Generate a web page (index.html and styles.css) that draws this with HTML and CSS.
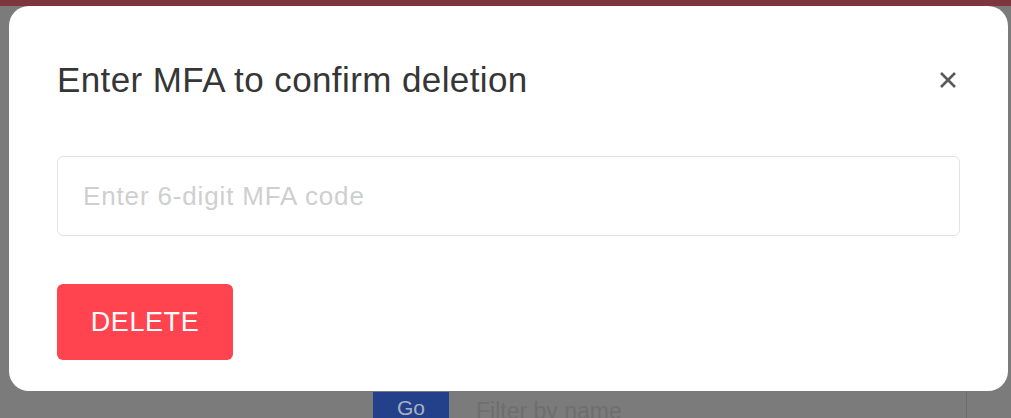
FILE: index.html
```html
<!DOCTYPE html>
<html>
<head>
<meta charset="utf-8">
<link rel="stylesheet" href="styles.css">
</head>
<body>
<div class="page">
  <div class="topbar"></div>
  <div class="content">
    <div class="spacer"></div>
    <div class="toolbar">
      <button class="go">Go</button>
      <div class="filter">Filter by name</div>
    </div>
  </div>
</div>
<div class="modal">
  <div class="modal-head">
    <h2 class="modal-title">Enter MFA to confirm deletion</h2>
    <button class="close" aria-label="Close">
      <svg width="18" height="18" viewBox="0 0 18 18"><path d="M2 2 L16 16 M16 2 L2 16" stroke="#5a5a5a" stroke-width="2.6" stroke-linecap="butt"/></svg>
    </button>
  </div>
  <input class="mfa" type="text" placeholder="Enter 6-digit MFA code">
  <button class="delete">DELETE</button>
</div>
</body>
</html>
```
FILE: styles.css
```css
html, body {
  margin: 0;
  padding: 0;
  width: 1011px;
  height: 418px;
  overflow: hidden;
  background: #7b7b7b;
  font-family: "Liberation Sans", Arial, sans-serif;
}
.page {
  display: flex;
  flex-direction: column;
  height: 418px;
}
.topbar {
  height: 6px;
  background: #7d363c;
}
.content {
  flex: 1;
  display: flex;
  flex-direction: column;
}
.spacer {
  height: 386px;
}
.toolbar {
  display: flex;
  padding-left: 373px;
  height: 26px;
}
.go {
  width: 76px;
  border: 0;
  margin: 0;
  background: #22418a;
  color: #a9b0c0;
  font-family: "Liberation Sans", Arial, sans-serif;
  font-size: 21px;
  padding: 4px 0 0;
  align-self: stretch;
  display: flex;
  justify-content: center;
  align-items: flex-start;
}
.filter {
  width: 518px;
  border-right: 1px solid #6c6c6c;
  color: #6e6e6e;
  font-size: 23px;
  line-height: 26px;
  padding: 6px 0 0 27px;
  box-sizing: border-box;
  white-space: nowrap;
}
.modal {
  position: absolute;
  top: 6px;
  left: 9px;
  width: 999px;
  height: 385px;
  box-sizing: border-box;
  background: #fff;
  border-radius: 20px;
  padding: 48px 48px 0;
  display: flex;
  flex-direction: column;
  align-items: flex-start;
}
.modal-head {
  display: flex;
  justify-content: space-between;
  align-items: center;
  align-self: stretch;
  height: 52px;
}
.modal-title {
  margin: 0;
  font-weight: normal;
  font-size: 35px;
  letter-spacing: 0.4px;
  color: #363636;
}
.close {
  border: 0;
  background: none;
  padding: 0;
  margin-right: 3px;
  width: 18px;
  height: 18px;
  display: flex;
}
.mfa {
  margin-top: 50px;
  width: 903px;
  height: 80px;
  box-sizing: border-box;
  border: 1px solid #e3e3e3;
  border-radius: 6px;
  padding: 0 25px;
  font-family: "Liberation Sans", Arial, sans-serif;
  font-size: 26px;
  letter-spacing: 0.85px;
  color: #333;
  outline: none;
}
.mfa::placeholder {
  color: #cfcfcf;
}
.delete {
  margin-top: 48px;
  width: 176px;
  height: 76px;
  border: 0;
  border-radius: 6px;
  background: #ff434f;
  color: #fff;
  font-family: "Liberation Sans", Arial, sans-serif;
  font-size: 27px;
  letter-spacing: 0.6px;
  padding: 0;
}
```
